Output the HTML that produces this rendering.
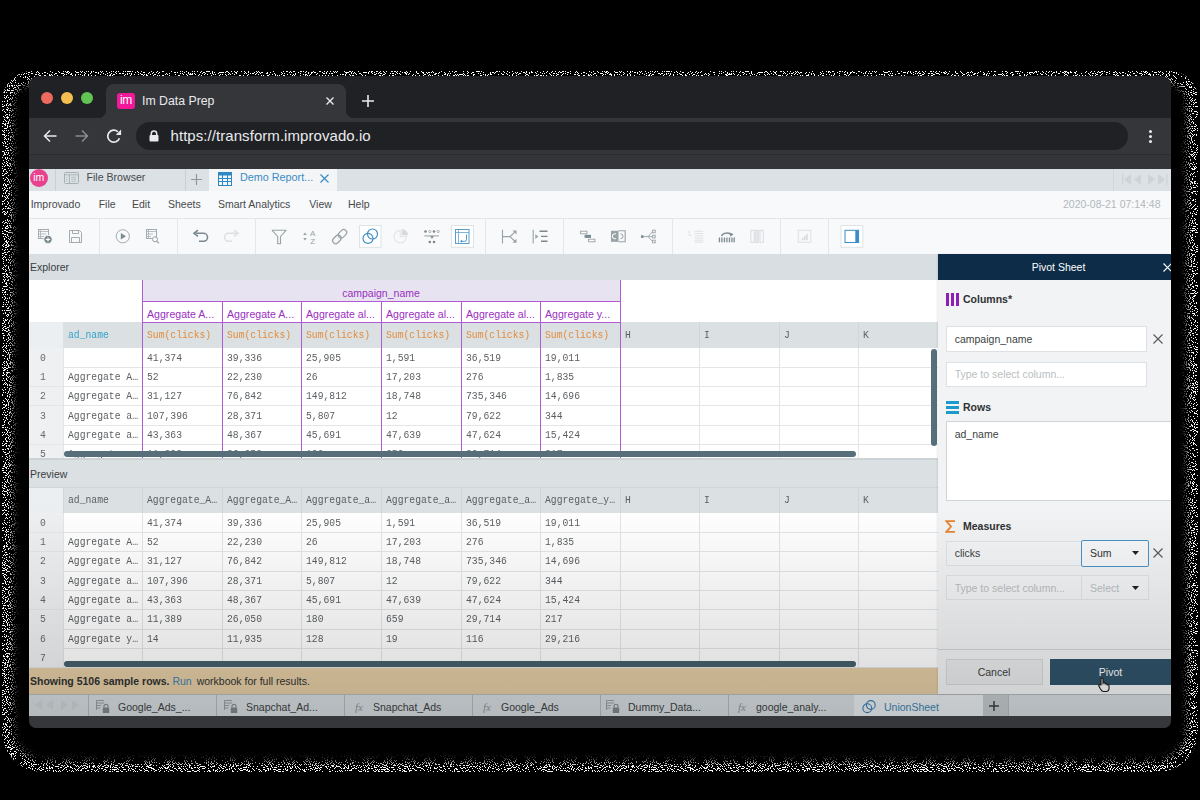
<!DOCTYPE html>
<html><head><meta charset="utf-8"><style>
html,body{margin:0;padding:0;width:1200px;height:800px;overflow:hidden;background:#000;}
body{position:relative;font-family:"Liberation Sans",sans-serif;}
div{position:absolute;box-sizing:border-box;}
svg{position:absolute;}
.m{font-family:"Liberation Mono",monospace;font-size:10.6px;line-height:12px;transform:scaleX(0.917);transform-origin:0 0;white-space:nowrap;}
b{font-weight:bold;}
</style></head><body>
<svg width="1200" height="800" style="position:absolute;left:0;top:0">
<defs>
<clipPath id="oc"><path d="M32 71H1169A28 28 0 0 1 1198 100V732A40 40 0 0 1 1158 772H42A40 40 0 0 1 2 732V101A30 30 0 0 1 32 71Z"/></clipPath>
<filter id="sh" x="0" y="0" width="1200" height="800" filterUnits="userSpaceOnUse" color-interpolation-filters="sRGB">
<feTurbulence type="fractalNoise" baseFrequency="0.95" numOctaves="1" seed="7" result="n"/>
<feColorMatrix in="n" type="matrix" values="0 0 0 0 0  0 0 0 0 0  0 0 0 0 0  -2.5 0 0 0 1.75" result="na"/>
<feComponentTransfer in="na" result="dots"><feFuncA type="discrete" tableValues="0 0 0 0 0 0 0 0 0 0 0 0 0 0 1 1 1 1 1 1"/></feComponentTransfer>
<feGaussianBlur in="SourceGraphic" stdDeviation="6" result="g"/>
<feComponentTransfer in="g" result="g2"><feFuncA type="linear" slope="2.6" intercept="0"/></feComponentTransfer>
<feComposite in="g2" in2="dots" operator="in"/>
</filter>
</defs>
<g clip-path="url(#oc)"><g filter="url(#sh)">
<path d="M35 74H1166A28 28 0 0 1 1195 103V729A40 40 0 0 1 1155 769H45A40 40 0 0 1 5 729V104A30 30 0 0 1 35 74Z" fill="none" stroke="#fff" stroke-width="6"/>
</g></g>
</svg>
<div style="left:29px;top:76px;width:1142px;height:652px;overflow:hidden;border-radius:9px 9px 7px 7px;"><div style="left:0px;top:0px;width:1142px;height:42px;background:#202124;"></div><div style="left:12px;top:16px;width:12px;height:12px;border-radius:50%;background:#ec6a5e;"></div><div style="left:32px;top:16px;width:12px;height:12px;border-radius:50%;background:#f4bf4f;"></div><div style="left:52px;top:16px;width:12px;height:12px;border-radius:50%;background:#61c554;"></div><div style="left:77px;top:8px;width:240px;height:34px;background:#35363a;border-radius:8px 8px 0 0;"></div><div style="left:69px;top:34px;width:8px;height:8px;background:radial-gradient(circle at 0 0,#202124 8px,#35363a 8.5px);"></div><div style="left:317px;top:34px;width:8px;height:8px;background:radial-gradient(circle at 100% 0,#202124 8px,#35363a 8.5px);"></div><div style="left:88px;top:17px;width:18px;height:16px;background:#f2189a;border-radius:3px;color:#fff;font-size:12px;line-height:15px;text-align:center;letter-spacing:-0.3px;">im</div><div style="left:113px;top:17px;color:#e8eaed;font-size:12.3px;line-height:16px;">Im Data Prep</div><svg style="position:absolute;left:297px;top:21px" width="8" height="8" viewBox="0 0 8 8"><path d="M0.5 0.5L7.5 7.5M7.5 0.5L0.5 7.5" stroke="#e8eaed" stroke-width="1.4"/></svg><svg style="position:absolute;left:333px;top:19px" width="12" height="12" viewBox="0 0 12 12"><path d="M6 0V12M0 6H12" stroke="#e8eaed" stroke-width="1.6"/></svg><div style="left:0px;top:42px;width:1142px;height:36px;background:#35363a;"></div><div style="left:0px;top:78px;width:1142px;height:1px;background:#2a2b2e;"></div><div style="left:0px;top:79px;width:1142px;height:14px;background:#343538;"></div><svg style="position:absolute;left:14px;top:53px" width="14" height="14" viewBox="0 0 14 14"><path d="M13.5 7H1.5M7 1.5L1.5 7L7 12.5" fill="none" stroke="#e8eaed" stroke-width="1.5"/></svg><svg style="position:absolute;left:46px;top:53px" width="14" height="14" viewBox="0 0 14 14"><path d="M0.5 7H12.5M7 1.5L12.5 7L7 12.5" fill="none" stroke="#8a8b8e" stroke-width="1.5"/></svg><svg style="position:absolute;left:78px;top:52px" width="16" height="16" viewBox="0 0 16 16"><path d="M12.44 10.25A6 6 0 1 1 10.9 3.8" fill="none" stroke="#e8eaed" stroke-width="1.7"/><path d="M14.1 1.6V6.9H8.8Z" fill="#e8eaed"/></svg><div style="left:107px;top:46px;width:992px;height:28px;background:#202124;border-radius:14px;"></div><svg style="position:absolute;left:120px;top:54px" width="10" height="12" viewBox="0 0 10 12"><path d="M2.3 5.5V3.7A2.7 2.7 0 0 1 7.7 3.7V5.5" fill="none" stroke="#e8eaed" stroke-width="1.5"/><rect x="0.5" y="5" width="9" height="6.5" rx="1" fill="#e8eaed"/></svg><div style="left:141.5px;top:51px;color:#e8eaed;font-size:15px;line-height:18px;letter-spacing:0.06px;">https://transform.improvado.io</div><div style="left:1119.5px;top:53.5px;width:3px;height:3px;border-radius:50%;background:#e8eaed;"></div><div style="left:1119.5px;top:58.5px;width:3px;height:3px;border-radius:50%;background:#e8eaed;"></div><div style="left:1119.5px;top:63.5px;width:3px;height:3px;border-radius:50%;background:#e8eaed;"></div><div style="left:0px;top:93px;width:1142px;height:22px;background:#dbe1e4;"></div><div style="left:0.7px;top:93px;width:18px;height:18px;background:#e8418d;border-radius:50%;color:#fff;font-size:10.5px;line-height:17px;text-align:center;">im</div><div style="left:26px;top:93px;width:1px;height:22px;background:#c9d0d4;"></div><svg style="position:absolute;left:35px;top:96px" width="15" height="12" viewBox="0 0 15 12"><rect x="0.5" y="0.5" width="14" height="11" rx="1" fill="none" stroke="#a7afb3"/><path d="M0.5 2.8H14.5M5.5 2.8V11.5" stroke="#a7afb3" stroke-width="0.9"/><path d="M2.3 5.3H3.7M2.3 7.3H3.7M2.3 9.3H3.7M7.3 5.3H12.2M7.3 7.3H12.2M7.3 9.3H12.2" stroke="#b3babe" stroke-width="0.8"/></svg><div style="left:57.5px;top:95px;color:#45494c;font-size:10.6px;line-height:13px;">File Browser</div><div style="left:156px;top:93px;width:1px;height:22px;background:#c9d0d4;"></div><svg style="position:absolute;left:162px;top:98px" width="11" height="11" viewBox="0 0 11 11"><path d="M5.5 0V11M0 5.5H11" stroke="#8f979c" stroke-width="1.2"/></svg><div style="left:180px;top:93px;width:128px;height:22px;background:#f3f5f6;"></div><svg style="position:absolute;left:189px;top:96px" width="14" height="14" viewBox="0 0 14 14"><rect x="0.5" y="0.5" width="13" height="13" fill="none" stroke="#2d89c5"/><rect x="0" y="0" width="14" height="3.5" fill="#2d89c5"/><path d="M0 6.5H14M0 9.5H14M4.5 3V14M9.5 3V14" stroke="#2d89c5"/></svg><div style="left:211px;top:95px;color:#3a8cc4;font-size:10.8px;line-height:13px;">Demo Report...</div><svg style="position:absolute;left:291px;top:98px" width="9" height="9" viewBox="0 0 9 9"><path d="M0.5 0.5L8.5 8.5M8.5 0.5L0.5 8.5" stroke="#3a8cc4" stroke-width="1.2"/></svg><div style="left:1084px;top:93px;width:1px;height:22px;background:#cfd5d8;"></div><svg style="position:absolute;left:1093px;top:98px" width="46" height="11" viewBox="0 0 46 11"><g fill="#cdd3d6"><rect x="0" y="0" width="1.2" height="11"/><path d="M9 0V11L2 5.5Z"/><path d="M19 0V11L12 5.5Z"/><path d="M26 0V11L33 5.5Z"/><path d="M36 0V11L43 5.5Z"/><rect x="44.3" y="0" width="1.2" height="11"/></g></svg><div style="left:0px;top:115px;width:1142px;height:27px;background:#f7f9fa;"></div><div style="left:1.7px;top:122px;color:#47494c;font-size:10.5px;line-height:13px;">Improvado</div><div style="left:69.7px;top:122px;color:#47494c;font-size:10.5px;line-height:13px;">File</div><div style="left:103px;top:122px;color:#47494c;font-size:10.5px;line-height:13px;">Edit</div><div style="left:139px;top:122px;color:#47494c;font-size:10.5px;line-height:13px;">Sheets</div><div style="left:189px;top:122px;color:#47494c;font-size:10.5px;line-height:13px;">Smart Analytics</div><div style="left:280.3px;top:122px;color:#47494c;font-size:10.5px;line-height:13px;">View</div><div style="left:319px;top:122px;color:#47494c;font-size:10.5px;line-height:13px;">Help</div><div style="left:1034px;top:122px;color:#b3b7ba;font-size:10.5px;line-height:13px;">2020-08-21 07:14:48</div><div style="left:0px;top:142px;width:1142px;height:36px;background:#f7f9fa;border-top:1px solid #e2e6e8;box-sizing:border-box;"></div><div style="left:70px;top:143px;width:1px;height:35px;background:#e4e8ea;"></div><div style="left:148px;top:143px;width:1px;height:35px;background:#e4e8ea;"></div><div style="left:226px;top:143px;width:1px;height:35px;background:#e4e8ea;"></div><div style="left:456px;top:143px;width:1px;height:35px;background:#e4e8ea;"></div><div style="left:534px;top:143px;width:1px;height:35px;background:#e4e8ea;"></div><div style="left:643px;top:143px;width:1px;height:35px;background:#e4e8ea;"></div><div style="left:751px;top:143px;width:1px;height:35px;background:#e4e8ea;"></div><div style="left:799px;top:143px;width:1px;height:35px;background:#e4e8ea;"></div><svg style="position:absolute;left:0;top:142px" width="1142" height="36" viewBox="29 218 1142 36"><rect x="38.5" y="229.5" width="10" height="9" fill="none" stroke="#a3abb0" stroke-width="1"/><path d="M38.5 231.5H48.5M38.5 234H46M38.5 236.5H44M40.5 229.5V238.5" stroke="#a9b1b5" stroke-width="0.8"/><circle cx="48" cy="239.5" r="4.2" fill="#7b8a92" stroke="#f7f9fa" stroke-width="0.9"/><path d="M48 237.4V241.6M45.9 239.5H50.1" stroke="#fff" stroke-width="1.2"/><path d="M69.5 230.5H79.5L81.5 232.5V242.5H69.5Z" fill="none" stroke="#a3abb0" stroke-width="1"/><path d="M72.5 230.5V233.5H78.5V230.5M71.5 242.5V237.5H79.5V242.5" fill="none" stroke="#a3abb0" stroke-width="1"/><circle cx="122.8" cy="236.3" r="6.6" fill="none" stroke="#a3abb0" stroke-width="1"/><path d="M120.8 233V239.6L126 236.3Z" fill="#7b8a92"/><rect x="146.5" y="229.5" width="10" height="9" fill="none" stroke="#a3abb0" stroke-width="1"/><path d="M146.5 231.5H156.5M146.5 234H153M146.5 236.5H151M148.5 229.5V238.5" stroke="#a9b1b5" stroke-width="0.8"/><circle cx="155" cy="239.3" r="2.5" fill="#f7f9fa" stroke="#99a2a7" stroke-width="1"/><path d="M156.8 241.1L159 243.3" stroke="#99a2a7" stroke-width="1.2"/><path d="M195.5 233.3H203.5A4 4 0 0 1 203.5 241.3H199" fill="none" stroke="#7b8a92" stroke-width="1.6"/><path d="M198 230.2L194 233.3L198 236.4" fill="none" stroke="#7b8a92" stroke-width="1.6"/><path d="M236.5 233.3H228.5A4 4 0 0 0 228.5 241.3H232" fill="none" stroke="#dde1e4" stroke-width="1.6"/><path d="M234 230.2L238 233.3L234 236.4" fill="none" stroke="#dde1e4" stroke-width="1.6"/><path d="M272.2 230.3H286L280.5 236.5V243.8H277.7V236.5Z" fill="none" stroke="#99a2a7" stroke-width="1.1" stroke-linejoin="round"/><path d="M303.2 235L305 232.6L306.8 235ZM303.2 238L305 240.4L306.8 238Z" fill="#99a2a7"/><text x="312.6" y="236" font-family="Liberation Sans" font-size="8" fill="#99a2a7" text-anchor="middle">A</text><text x="312.6" y="244.2" font-family="Liberation Sans" font-size="8" fill="#99a2a7" text-anchor="middle">Z</text><g transform="rotate(-45 339.7 236.6)" fill="none" stroke="#99a2a7" stroke-width="1.2"><rect x="331" y="233.6" width="9.5" height="6" rx="3"/><rect x="338.9" y="233.6" width="9.5" height="6" rx="3"/></g><rect x="359.5" y="225.5" width="21.5" height="21.8" fill="#fff" stroke="#dfe3e5" stroke-width="1"/><circle cx="368" cy="238.4" r="5" fill="none" stroke="#3b8cc5" stroke-width="1.15"/><circle cx="372.5" cy="234" r="5" fill="none" stroke="#3b8cc5" stroke-width="1.15"/><path d="M400.3 230.6A6.2 6.2 0 1 0 406.5 236.8H400.3Z" fill="none" stroke="#e1e5e7" stroke-width="1.1"/><path d="M401.8 229.1V235.3H408A6.2 6.2 0 0 0 401.8 229.1Z" fill="#d6dadd"/><g fill="#7b8a92"><circle cx="425.5" cy="231.5" r="1.3"/><circle cx="434" cy="231.5" r="1.3"/><circle cx="429.8" cy="242" r="1.3"/><circle cx="434" cy="242" r="1.3"/></g><circle cx="429.8" cy="231.5" r="1.1" fill="none" stroke="#7b8a92" stroke-width="0.6"/><circle cx="438.2" cy="231.5" r="1.1" fill="none" stroke="#7b8a92" stroke-width="0.6"/><path d="M424.3 235.9H439" stroke="#99a2a7" stroke-width="1"/><path d="M430 236.3H434L432 238.8Z" fill="#7b8a92"/><rect x="451.5" y="225.5" width="22" height="21.8" fill="#fff" stroke="#dfe3e5" stroke-width="1"/><rect x="455.5" y="229.5" width="13.5" height="14" fill="none" stroke="#3b8cc5" stroke-width="1" opacity="0.85"/><path d="M455.5 232.5H469M458.5 229.5V243.5" stroke="#3b8cc5" stroke-width="0.8" opacity="0.8"/><path d="M466.5 234.5V239.5A1.8 1.8 0 0 1 464.7 241.3H461.5" fill="none" stroke="#3b8cc5" stroke-width="0.9"/><path d="M462 239.8L460 241.3L462 242.8Z" fill="#3b8cc5"/><path d="M502.5 229.8V243.5M502.5 236.6H510L515.8 231.2M510 236.6L515.8 242" fill="none" stroke="#99a2a7" stroke-width="1.1"/><path d="M512.5 230.5H516.5V234.5ZM512.5 242.8H516.5V238.8Z" fill="#99a2a7"/><path d="M533.2 229.8V243.5" stroke="#99a2a7" stroke-width="1.1"/><path d="M535.3 234.3V238.9L538.3 236.6Z" fill="#99a2a7"/><path d="M539.5 231.2H547.5M541 236.4H547.5M541 241.3H547.5" stroke="#7b8a92" stroke-width="1.4"/><rect x="580.6" y="231.2" width="6.4" height="2.6" fill="none" stroke="#99a2a7" stroke-width="0.9"/><rect x="584.6" y="234.8" width="6.4" height="3.1" fill="#7b8a92"/><rect x="588.6" y="239.2" width="6.4" height="2.6" fill="none" stroke="#99a2a7" stroke-width="0.9"/><rect x="611" y="230.8" width="7.5" height="11" fill="#99a2a7"/><path d="M618.5 230.8H625.2V241.8H618.5" fill="none" stroke="#99a2a7" stroke-width="1.1"/><path d="M616 234A2.5 2.5 0 1 0 616 238.5" fill="none" stroke="#fff" stroke-width="1.1"/><path d="M620.5 233.8A2.5 2.5 0 1 1 620.5 238.8" fill="none" stroke="#99a2a7" stroke-width="1"/><rect x="641" y="235.3" width="2.6" height="2.6" fill="#7b8a92"/><path d="M643.6 236.6H648M648 236.6L652.6 231.5M648 236.6H652.6M648 236.6L652.6 241.5" fill="none" stroke="#99a2a7" stroke-width="0.9"/><g fill="#f7f9fa" stroke="#99a2a7" stroke-width="0.9"><rect x="652.6" y="230.2" width="2.6" height="2.6"/><rect x="652.6" y="235.3" width="2.6" height="2.6"/><rect x="652.6" y="240.2" width="2.6" height="2.6"/></g><path d="M689.3 230.8V235.5H692M694.5 231.3H703.3M694.5 233.5H703.3M694.5 235.8H703.3M694.5 238H703.3M694.5 240.2H703.3M694.5 242.2H703.3" fill="none" stroke="#dde1e4" stroke-width="0.9"/><path d="M721.5 236A5.5 4 0 0 1 731.5 235" fill="none" stroke="#7b8a92" stroke-width="1.4"/><path d="M729.8 232.5L733.5 234.2L730.5 236.8Z" fill="#7b8a92"/><g fill="#7b8a92"><rect x="718.8" y="237.5" width="1.3" height="4.8"/><rect x="721.3" y="237.5" width="1.3" height="4.8"/><rect x="723.8" y="237.5" width="1.3" height="4.8"/><rect x="726.3" y="237.5" width="1.3" height="4.8"/><rect x="728.8" y="237.5" width="1.3" height="4.8"/><rect x="731.3" y="237.5" width="1.3" height="4.8"/><rect x="733.5" y="237.5" width="1.3" height="4.8"/></g><g fill="none" stroke="#d9dde0" stroke-width="1"><rect x="750.8" y="230.3" width="3.3" height="12"/><rect x="755.3" y="230.3" width="3.3" height="12"/><rect x="760" y="230.3" width="3.3" height="12"/></g><rect x="755.8" y="230.8" width="2.3" height="11" fill="#e3e6e8"/><rect x="798.3" y="230.3" width="12.5" height="12" fill="none" stroke="#dde1e4" stroke-width="1"/><g fill="#d5d9dc"><rect x="801.8" y="237.8" width="1.5" height="2.5"/><rect x="804" y="236" width="1.5" height="4.3"/><rect x="806.2" y="234" width="1.5" height="6.3"/></g><rect x="841" y="225.5" width="21.8" height="21.8" fill="#fff" stroke="#dfe3e5" stroke-width="1"/><rect x="845" y="230.3" width="13.6" height="12.2" fill="none" stroke="#3b8cc5" stroke-width="1"/><rect x="855.3" y="230.3" width="3.3" height="12.2" fill="#3b8cc5"/></svg><div style="left:0px;top:178px;width:1142px;height:26px;background:#d8dee1;"></div><div style="left:1px;top:185px;color:#3a3d3f;font-size:10.5px;line-height:13px;">Explorer</div><div class="clip" style="left:0px;top:204px;width:909px;height:178px;background:#ffffff;overflow:hidden;"></div><div style="left:0;top:0;width:1142px;height:382px;overflow:hidden;clip-path:inset(204px 0 0 0);"><div style="left:113px;top:204px;width:478px;height:21px;background:#e7e3f1;"></div><div style="left:113px;top:211px;width:478px;text-align:center;color:#9b2fc0;font-size:10.5px;line-height:13px;">campaign_name</div><div style="left:118px;top:232px;color:#9b2fc0;font-size:10.6px;line-height:13px;white-space:nowrap;">Aggregate A...</div><div style="left:198px;top:232px;color:#9b2fc0;font-size:10.6px;line-height:13px;white-space:nowrap;">Aggregate A...</div><div style="left:277px;top:232px;color:#9b2fc0;font-size:10.6px;line-height:13px;white-space:nowrap;">Aggregate al...</div><div style="left:357px;top:232px;color:#9b2fc0;font-size:10.6px;line-height:13px;white-space:nowrap;">Aggregate al...</div><div style="left:437px;top:232px;color:#9b2fc0;font-size:10.6px;line-height:13px;white-space:nowrap;">Aggregate al...</div><div style="left:516px;top:232px;color:#9b2fc0;font-size:10.6px;line-height:13px;white-space:nowrap;">Aggregate y...</div><div style="left:0px;top:246px;width:909px;height:26px;background:#dbe0e3;"></div><div style="left:0px;top:246px;width:34px;height:26px;background:#eceff1;"></div><div class="m" style="left:38.5px;top:252.5px;color:#36a3c9;">ad_name</div><div class="m" style="left:117.5px;top:252.5px;color:#e38b3a;">Sum(clicks)</div><div class="m" style="left:197.5px;top:252.5px;color:#e38b3a;">Sum(clicks)</div><div class="m" style="left:276.5px;top:252.5px;color:#e38b3a;">Sum(clicks)</div><div class="m" style="left:356.5px;top:252.5px;color:#e38b3a;">Sum(clicks)</div><div class="m" style="left:436.5px;top:252.5px;color:#e38b3a;">Sum(clicks)</div><div class="m" style="left:515.5px;top:252.5px;color:#e38b3a;">Sum(clicks)</div><div class="m" style="left:595.5px;top:252.5px;color:#5a5f62;">H</div><div class="m" style="left:674.5px;top:252.5px;color:#5a5f62;">I</div><div class="m" style="left:754.5px;top:252.5px;color:#5a5f62;">J</div><div class="m" style="left:833.5px;top:252.5px;color:#5a5f62;">K</div><div style="left:670px;top:246px;width:1px;height:26px;background:#cfd5d8;"></div><div style="left:750px;top:246px;width:1px;height:26px;background:#cfd5d8;"></div><div style="left:829px;top:246px;width:1px;height:26px;background:#cfd5d8;"></div><div style="left:0px;top:272.0px;width:34px;height:19.3px;background:#eef0f2;"></div><div style="left:0px;top:290.8px;width:909px;height:1px;background:#e3e6e8;"></div><div class="m" style="left:11px;top:275.6px;color:#666b6e;">0</div><div class="m" style="left:38.5px;top:275.6px;color:#5b5f62;white-space:nowrap;"></div><div class="m" style="left:117.5px;top:275.6px;color:#5b5f62;white-space:nowrap;">41,374</div><div class="m" style="left:197.5px;top:275.6px;color:#5b5f62;white-space:nowrap;">39,336</div><div class="m" style="left:276.5px;top:275.6px;color:#5b5f62;white-space:nowrap;">25,905</div><div class="m" style="left:356.5px;top:275.6px;color:#5b5f62;white-space:nowrap;">1,591</div><div class="m" style="left:436.5px;top:275.6px;color:#5b5f62;white-space:nowrap;">36,519</div><div class="m" style="left:515.5px;top:275.6px;color:#5b5f62;white-space:nowrap;">19,011</div><div style="left:0px;top:291.3px;width:34px;height:19.3px;background:#eef0f2;"></div><div style="left:0px;top:310.1px;width:909px;height:1px;background:#e3e6e8;"></div><div class="m" style="left:11px;top:294.90000000000003px;color:#666b6e;">1</div><div class="m" style="left:38.5px;top:294.90000000000003px;color:#5b5f62;white-space:nowrap;">Aggregate A…</div><div class="m" style="left:117.5px;top:294.90000000000003px;color:#5b5f62;white-space:nowrap;">52</div><div class="m" style="left:197.5px;top:294.90000000000003px;color:#5b5f62;white-space:nowrap;">22,230</div><div class="m" style="left:276.5px;top:294.90000000000003px;color:#5b5f62;white-space:nowrap;">26</div><div class="m" style="left:356.5px;top:294.90000000000003px;color:#5b5f62;white-space:nowrap;">17,203</div><div class="m" style="left:436.5px;top:294.90000000000003px;color:#5b5f62;white-space:nowrap;">276</div><div class="m" style="left:515.5px;top:294.90000000000003px;color:#5b5f62;white-space:nowrap;">1,835</div><div style="left:0px;top:310.6px;width:34px;height:19.3px;background:#eef0f2;"></div><div style="left:0px;top:329.40000000000003px;width:909px;height:1px;background:#e3e6e8;"></div><div class="m" style="left:11px;top:314.20000000000005px;color:#666b6e;">2</div><div class="m" style="left:38.5px;top:314.20000000000005px;color:#5b5f62;white-space:nowrap;">Aggregate A…</div><div class="m" style="left:117.5px;top:314.20000000000005px;color:#5b5f62;white-space:nowrap;">31,127</div><div class="m" style="left:197.5px;top:314.20000000000005px;color:#5b5f62;white-space:nowrap;">76,842</div><div class="m" style="left:276.5px;top:314.20000000000005px;color:#5b5f62;white-space:nowrap;">149,812</div><div class="m" style="left:356.5px;top:314.20000000000005px;color:#5b5f62;white-space:nowrap;">18,748</div><div class="m" style="left:436.5px;top:314.20000000000005px;color:#5b5f62;white-space:nowrap;">735,346</div><div class="m" style="left:515.5px;top:314.20000000000005px;color:#5b5f62;white-space:nowrap;">14,696</div><div style="left:0px;top:329.9px;width:34px;height:19.3px;background:#eef0f2;"></div><div style="left:0px;top:348.7px;width:909px;height:1px;background:#e3e6e8;"></div><div class="m" style="left:11px;top:333.5px;color:#666b6e;">3</div><div class="m" style="left:38.5px;top:333.5px;color:#5b5f62;white-space:nowrap;">Aggregate a…</div><div class="m" style="left:117.5px;top:333.5px;color:#5b5f62;white-space:nowrap;">107,396</div><div class="m" style="left:197.5px;top:333.5px;color:#5b5f62;white-space:nowrap;">28,371</div><div class="m" style="left:276.5px;top:333.5px;color:#5b5f62;white-space:nowrap;">5,807</div><div class="m" style="left:356.5px;top:333.5px;color:#5b5f62;white-space:nowrap;">12</div><div class="m" style="left:436.5px;top:333.5px;color:#5b5f62;white-space:nowrap;">79,622</div><div class="m" style="left:515.5px;top:333.5px;color:#5b5f62;white-space:nowrap;">344</div><div style="left:0px;top:349.2px;width:34px;height:19.3px;background:#eef0f2;"></div><div style="left:0px;top:368.0px;width:909px;height:1px;background:#e3e6e8;"></div><div class="m" style="left:11px;top:352.8px;color:#666b6e;">4</div><div class="m" style="left:38.5px;top:352.8px;color:#5b5f62;white-space:nowrap;">Aggregate a…</div><div class="m" style="left:117.5px;top:352.8px;color:#5b5f62;white-space:nowrap;">43,363</div><div class="m" style="left:197.5px;top:352.8px;color:#5b5f62;white-space:nowrap;">48,367</div><div class="m" style="left:276.5px;top:352.8px;color:#5b5f62;white-space:nowrap;">45,691</div><div class="m" style="left:356.5px;top:352.8px;color:#5b5f62;white-space:nowrap;">47,639</div><div class="m" style="left:436.5px;top:352.8px;color:#5b5f62;white-space:nowrap;">47,624</div><div class="m" style="left:515.5px;top:352.8px;color:#5b5f62;white-space:nowrap;">15,424</div><div style="left:0px;top:368.5px;width:34px;height:19.3px;background:#eef0f2;"></div><div style="left:0px;top:387.3px;width:909px;height:1px;background:#e3e6e8;"></div><div class="m" style="left:11px;top:372.1px;color:#666b6e;">5</div><div class="m" style="left:38.5px;top:372.1px;color:#5b5f62;white-space:nowrap;">Aggregate a…</div><div class="m" style="left:117.5px;top:372.1px;color:#5b5f62;white-space:nowrap;">11,389</div><div class="m" style="left:197.5px;top:372.1px;color:#5b5f62;white-space:nowrap;">26,050</div><div class="m" style="left:276.5px;top:372.1px;color:#5b5f62;white-space:nowrap;">180</div><div class="m" style="left:356.5px;top:372.1px;color:#5b5f62;white-space:nowrap;">659</div><div class="m" style="left:436.5px;top:372.1px;color:#5b5f62;white-space:nowrap;">29,714</div><div class="m" style="left:515.5px;top:372.1px;color:#5b5f62;white-space:nowrap;">217</div><div style="left:34px;top:272px;width:1px;height:115.80000000000001px;background:#e3e6e8;"></div><div style="left:113px;top:272px;width:1px;height:115.80000000000001px;background:#e3e6e8;"></div><div style="left:193px;top:272px;width:1px;height:115.80000000000001px;background:#e3e6e8;"></div><div style="left:272px;top:272px;width:1px;height:115.80000000000001px;background:#e3e6e8;"></div><div style="left:352px;top:272px;width:1px;height:115.80000000000001px;background:#e3e6e8;"></div><div style="left:432px;top:272px;width:1px;height:115.80000000000001px;background:#e3e6e8;"></div><div style="left:511px;top:272px;width:1px;height:115.80000000000001px;background:#e3e6e8;"></div><div style="left:591px;top:272px;width:1px;height:115.80000000000001px;background:#e3e6e8;"></div><div style="left:670px;top:272px;width:1px;height:115.80000000000001px;background:#e3e6e8;"></div><div style="left:750px;top:272px;width:1px;height:115.80000000000001px;background:#e3e6e8;"></div><div style="left:829px;top:272px;width:1px;height:115.80000000000001px;background:#e3e6e8;"></div><div style="left:113px;top:204px;width:1px;height:178px;background:#b25ad5;"></div><div style="left:193px;top:225px;width:1px;height:157px;background:#b25ad5;"></div><div style="left:272px;top:225px;width:1px;height:157px;background:#b25ad5;"></div><div style="left:352px;top:225px;width:1px;height:157px;background:#b25ad5;"></div><div style="left:432px;top:225px;width:1px;height:157px;background:#b25ad5;"></div><div style="left:511px;top:225px;width:1px;height:157px;background:#b25ad5;"></div><div style="left:591px;top:204px;width:1px;height:178px;background:#b25ad5;"></div><div style="left:113px;top:225px;width:478px;height:1px;background:#b25ad5;"></div><div style="left:113px;top:246px;width:478px;height:1px;background:#b25ad5;"></div><div style="left:35px;top:375px;width:792px;height:6px;background:#566f7b;border-radius:3px;"></div><div style="left:902px;top:272.5px;width:6px;height:97.5px;background:#566f7b;border-radius:3px;"></div></div><div style="left:0;top:382px;width:909px;height:210px;overflow:hidden;"><div style="left:0;top:-382px;width:1142px;height:800px;"><div style="left:0px;top:382px;width:1142px;height:29px;background:#dbe0e3;border-top:2px solid #ccd2d5;box-sizing:border-box;"></div><div style="left:1px;top:392px;color:#3a3d3f;font-size:10.5px;line-height:13px;">Preview</div><div style="left:0px;top:411px;width:909px;height:181px;background:#ffffff;"></div><div style="left:0px;top:411px;width:909px;height:26.2px;background:#dbe0e3;border-top:1px solid #cfd5d8;box-sizing:border-box;"></div><div style="left:0px;top:411.5px;width:34px;height:25.7px;background:#eceff1;"></div><div class="m" style="left:38.5px;top:418px;color:#5a5f62;white-space:nowrap;">ad_name</div><div class="m" style="left:117.5px;top:418px;color:#5a5f62;white-space:nowrap;">Aggregate_A…</div><div class="m" style="left:197.5px;top:418px;color:#5a5f62;white-space:nowrap;">Aggregate_A…</div><div class="m" style="left:276.5px;top:418px;color:#5a5f62;white-space:nowrap;">Aggregate_a…</div><div class="m" style="left:356.5px;top:418px;color:#5a5f62;white-space:nowrap;">Aggregate_a…</div><div class="m" style="left:436.5px;top:418px;color:#5a5f62;white-space:nowrap;">Aggregate_a…</div><div class="m" style="left:515.5px;top:418px;color:#5a5f62;white-space:nowrap;">Aggregate_y…</div><div class="m" style="left:595.5px;top:418px;color:#5a5f62;white-space:nowrap;">H</div><div class="m" style="left:674.5px;top:418px;color:#5a5f62;white-space:nowrap;">I</div><div class="m" style="left:754.5px;top:418px;color:#5a5f62;white-space:nowrap;">J</div><div class="m" style="left:833.5px;top:418px;color:#5a5f62;white-space:nowrap;">K</div><div style="left:34px;top:411px;width:1px;height:26px;background:#cfd5d8;"></div><div style="left:113px;top:411px;width:1px;height:26px;background:#cfd5d8;"></div><div style="left:193px;top:411px;width:1px;height:26px;background:#cfd5d8;"></div><div style="left:272px;top:411px;width:1px;height:26px;background:#cfd5d8;"></div><div style="left:352px;top:411px;width:1px;height:26px;background:#cfd5d8;"></div><div style="left:432px;top:411px;width:1px;height:26px;background:#cfd5d8;"></div><div style="left:511px;top:411px;width:1px;height:26px;background:#cfd5d8;"></div><div style="left:591px;top:411px;width:1px;height:26px;background:#cfd5d8;"></div><div style="left:670px;top:411px;width:1px;height:26px;background:#cfd5d8;"></div><div style="left:750px;top:411px;width:1px;height:26px;background:#cfd5d8;"></div><div style="left:829px;top:411px;width:1px;height:26px;background:#cfd5d8;"></div><div style="left:0px;top:437.2px;width:34px;height:19.3px;background:#eef0f2;"></div><div style="left:0px;top:456.0px;width:909px;height:1px;background:#e3e6e8;"></div><div class="m" style="left:11px;top:440.8px;color:#666b6e;">0</div><div class="m" style="left:38.5px;top:440.8px;color:#5b5f62;white-space:nowrap;"></div><div class="m" style="left:117.5px;top:440.8px;color:#5b5f62;white-space:nowrap;">41,374</div><div class="m" style="left:197.5px;top:440.8px;color:#5b5f62;white-space:nowrap;">39,336</div><div class="m" style="left:276.5px;top:440.8px;color:#5b5f62;white-space:nowrap;">25,905</div><div class="m" style="left:356.5px;top:440.8px;color:#5b5f62;white-space:nowrap;">1,591</div><div class="m" style="left:436.5px;top:440.8px;color:#5b5f62;white-space:nowrap;">36,519</div><div class="m" style="left:515.5px;top:440.8px;color:#5b5f62;white-space:nowrap;">19,011</div><div style="left:0px;top:456.5px;width:34px;height:19.3px;background:#eef0f2;"></div><div style="left:0px;top:475.3px;width:909px;height:1px;background:#e3e6e8;"></div><div class="m" style="left:11px;top:460.1px;color:#666b6e;">1</div><div class="m" style="left:38.5px;top:460.1px;color:#5b5f62;white-space:nowrap;">Aggregate A…</div><div class="m" style="left:117.5px;top:460.1px;color:#5b5f62;white-space:nowrap;">52</div><div class="m" style="left:197.5px;top:460.1px;color:#5b5f62;white-space:nowrap;">22,230</div><div class="m" style="left:276.5px;top:460.1px;color:#5b5f62;white-space:nowrap;">26</div><div class="m" style="left:356.5px;top:460.1px;color:#5b5f62;white-space:nowrap;">17,203</div><div class="m" style="left:436.5px;top:460.1px;color:#5b5f62;white-space:nowrap;">276</div><div class="m" style="left:515.5px;top:460.1px;color:#5b5f62;white-space:nowrap;">1,835</div><div style="left:0px;top:475.8px;width:34px;height:19.3px;background:#eef0f2;"></div><div style="left:0px;top:494.6px;width:909px;height:1px;background:#e3e6e8;"></div><div class="m" style="left:11px;top:479.40000000000003px;color:#666b6e;">2</div><div class="m" style="left:38.5px;top:479.40000000000003px;color:#5b5f62;white-space:nowrap;">Aggregate A…</div><div class="m" style="left:117.5px;top:479.40000000000003px;color:#5b5f62;white-space:nowrap;">31,127</div><div class="m" style="left:197.5px;top:479.40000000000003px;color:#5b5f62;white-space:nowrap;">76,842</div><div class="m" style="left:276.5px;top:479.40000000000003px;color:#5b5f62;white-space:nowrap;">149,812</div><div class="m" style="left:356.5px;top:479.40000000000003px;color:#5b5f62;white-space:nowrap;">18,748</div><div class="m" style="left:436.5px;top:479.40000000000003px;color:#5b5f62;white-space:nowrap;">735,346</div><div class="m" style="left:515.5px;top:479.40000000000003px;color:#5b5f62;white-space:nowrap;">14,696</div><div style="left:0px;top:495.1px;width:34px;height:19.3px;background:#eef0f2;"></div><div style="left:0px;top:513.9px;width:909px;height:1px;background:#e3e6e8;"></div><div class="m" style="left:11px;top:498.70000000000005px;color:#666b6e;">3</div><div class="m" style="left:38.5px;top:498.70000000000005px;color:#5b5f62;white-space:nowrap;">Aggregate a…</div><div class="m" style="left:117.5px;top:498.70000000000005px;color:#5b5f62;white-space:nowrap;">107,396</div><div class="m" style="left:197.5px;top:498.70000000000005px;color:#5b5f62;white-space:nowrap;">28,371</div><div class="m" style="left:276.5px;top:498.70000000000005px;color:#5b5f62;white-space:nowrap;">5,807</div><div class="m" style="left:356.5px;top:498.70000000000005px;color:#5b5f62;white-space:nowrap;">12</div><div class="m" style="left:436.5px;top:498.70000000000005px;color:#5b5f62;white-space:nowrap;">79,622</div><div class="m" style="left:515.5px;top:498.70000000000005px;color:#5b5f62;white-space:nowrap;">344</div><div style="left:0px;top:514.4px;width:34px;height:19.3px;background:#eef0f2;"></div><div style="left:0px;top:533.1999999999999px;width:909px;height:1px;background:#e3e6e8;"></div><div class="m" style="left:11px;top:518.0px;color:#666b6e;">4</div><div class="m" style="left:38.5px;top:518.0px;color:#5b5f62;white-space:nowrap;">Aggregate a…</div><div class="m" style="left:117.5px;top:518.0px;color:#5b5f62;white-space:nowrap;">43,363</div><div class="m" style="left:197.5px;top:518.0px;color:#5b5f62;white-space:nowrap;">48,367</div><div class="m" style="left:276.5px;top:518.0px;color:#5b5f62;white-space:nowrap;">45,691</div><div class="m" style="left:356.5px;top:518.0px;color:#5b5f62;white-space:nowrap;">47,639</div><div class="m" style="left:436.5px;top:518.0px;color:#5b5f62;white-space:nowrap;">47,624</div><div class="m" style="left:515.5px;top:518.0px;color:#5b5f62;white-space:nowrap;">15,424</div><div style="left:0px;top:533.7px;width:34px;height:19.3px;background:#eef0f2;"></div><div style="left:0px;top:552.5px;width:909px;height:1px;background:#e3e6e8;"></div><div class="m" style="left:11px;top:537.3000000000001px;color:#666b6e;">5</div><div class="m" style="left:38.5px;top:537.3000000000001px;color:#5b5f62;white-space:nowrap;">Aggregate a…</div><div class="m" style="left:117.5px;top:537.3000000000001px;color:#5b5f62;white-space:nowrap;">11,389</div><div class="m" style="left:197.5px;top:537.3000000000001px;color:#5b5f62;white-space:nowrap;">26,050</div><div class="m" style="left:276.5px;top:537.3000000000001px;color:#5b5f62;white-space:nowrap;">180</div><div class="m" style="left:356.5px;top:537.3000000000001px;color:#5b5f62;white-space:nowrap;">659</div><div class="m" style="left:436.5px;top:537.3000000000001px;color:#5b5f62;white-space:nowrap;">29,714</div><div class="m" style="left:515.5px;top:537.3000000000001px;color:#5b5f62;white-space:nowrap;">217</div><div style="left:0px;top:553.0px;width:34px;height:19.3px;background:#eef0f2;"></div><div style="left:0px;top:571.8px;width:909px;height:1px;background:#e3e6e8;"></div><div class="m" style="left:11px;top:556.6px;color:#666b6e;">6</div><div class="m" style="left:38.5px;top:556.6px;color:#5b5f62;white-space:nowrap;">Aggregate y…</div><div class="m" style="left:117.5px;top:556.6px;color:#5b5f62;white-space:nowrap;">14</div><div class="m" style="left:197.5px;top:556.6px;color:#5b5f62;white-space:nowrap;">11,935</div><div class="m" style="left:276.5px;top:556.6px;color:#5b5f62;white-space:nowrap;">128</div><div class="m" style="left:356.5px;top:556.6px;color:#5b5f62;white-space:nowrap;">19</div><div class="m" style="left:436.5px;top:556.6px;color:#5b5f62;white-space:nowrap;">116</div><div class="m" style="left:515.5px;top:556.6px;color:#5b5f62;white-space:nowrap;">29,216</div><div style="left:0px;top:572.3px;width:34px;height:19.3px;background:#eef0f2;"></div><div style="left:0px;top:591.0999999999999px;width:909px;height:1px;background:#e3e6e8;"></div><div class="m" style="left:11px;top:575.9px;color:#666b6e;">7</div><div class="m" style="left:38.5px;top:575.9px;color:#5b5f62;white-space:nowrap;"></div><div class="m" style="left:117.5px;top:575.9px;color:#5b5f62;white-space:nowrap;"></div><div class="m" style="left:197.5px;top:575.9px;color:#5b5f62;white-space:nowrap;"></div><div class="m" style="left:276.5px;top:575.9px;color:#5b5f62;white-space:nowrap;"></div><div class="m" style="left:356.5px;top:575.9px;color:#5b5f62;white-space:nowrap;"></div><div class="m" style="left:436.5px;top:575.9px;color:#5b5f62;white-space:nowrap;"></div><div class="m" style="left:515.5px;top:575.9px;color:#5b5f62;white-space:nowrap;"></div><div style="left:34px;top:437.2px;width:1px;height:154.4px;background:#e3e6e8;"></div><div style="left:113px;top:437.2px;width:1px;height:154.4px;background:#e3e6e8;"></div><div style="left:193px;top:437.2px;width:1px;height:154.4px;background:#e3e6e8;"></div><div style="left:272px;top:437.2px;width:1px;height:154.4px;background:#e3e6e8;"></div><div style="left:352px;top:437.2px;width:1px;height:154.4px;background:#e3e6e8;"></div><div style="left:432px;top:437.2px;width:1px;height:154.4px;background:#e3e6e8;"></div><div style="left:511px;top:437.2px;width:1px;height:154.4px;background:#e3e6e8;"></div><div style="left:591px;top:437.2px;width:1px;height:154.4px;background:#e3e6e8;"></div><div style="left:670px;top:437.2px;width:1px;height:154.4px;background:#e3e6e8;"></div><div style="left:750px;top:437.2px;width:1px;height:154.4px;background:#e3e6e8;"></div><div style="left:829px;top:437.2px;width:1px;height:154.4px;background:#e3e6e8;"></div><div style="left:35px;top:584.5px;width:792px;height:6.5px;background:#46606b;border-radius:3px;"></div></div></div><div style="left:0px;top:592px;width:909px;height:26px;background:#e3cca3;"></div><div style="left:1px;top:599px;color:#2f3133;font-size:10.5px;line-height:13px;white-space:nowrap;"><b>Showing 5106 sample rows.</b> <span style="color:#3a7fb8">Run</span><span style="margin-left:5px">workbook</span> for full results.</div><div style="left:0px;top:618px;width:1142px;height:22px;background:#d5dbdf;"></div><div style="left:0px;top:618px;width:1142px;height:1px;background:#b5bbbe;"></div><svg style="position:absolute;left:6px;top:624px" width="44" height="10" viewBox="0 0 44 10"><g fill="#ccd2d5"><path d="M0 5L7 0V10Z"/><path d="M11 5L18 0V10Z"/><path d="M33 5L26 0V10Z"/><path d="M44 5L37 0V10Z"/></g></svg><div style="left:59px;top:619px;width:1px;height:21px;background:#b3b9bc;"></div><div style="left:187px;top:619px;width:1px;height:21px;background:#b3b9bc;"></div><div style="left:315px;top:619px;width:1px;height:21px;background:#b3b9bc;"></div><div style="left:443px;top:619px;width:1px;height:21px;background:#b3b9bc;"></div><div style="left:571px;top:619px;width:1px;height:21px;background:#b3b9bc;"></div><div style="left:698.5px;top:619px;width:1px;height:21px;background:#b3b9bc;"></div><div style="left:824.75px;top:619px;width:1px;height:21px;background:#b3b9bc;"></div><div style="left:953px;top:619px;width:1px;height:21px;background:#b3b9bc;"></div><div style="left:978.5px;top:619px;width:1px;height:21px;background:#b3b9bc;"></div><div style="left:824.75px;top:619px;width:129.25px;height:21px;background:#e6ebee;"></div><div style="left:954px;top:619px;width:25px;height:21px;background:#c2c8cb;"></div><svg style="position:absolute;left:960px;top:625px" width="10" height="10" viewBox="0 0 10 10"><path d="M5 0V10M0 5H10" stroke="#3a3f42" stroke-width="1.5"/></svg><svg style="position:absolute;left:67px;top:624px" width="14" height="14" viewBox="0 0 14 14"><path d="M0.5 0.5H8M0.5 3H8M0.5 5.5H5M0.5 8H4.5M0.5 0.5V10" fill="none" stroke="#8f979b" stroke-width="0.9"/><path d="M8 7.5V6.3A2 2 0 0 1 12 6.3V7.5" fill="none" stroke="#7f878b" stroke-width="1.1"/><rect x="6.8" y="7.5" width="6.4" height="5.5" rx="0.6" fill="#7f878b"/></svg><div style="left:89px;top:625px;color:#3c3f42;font-size:10.5px;line-height:13px;white-space:nowrap;">Google_Ads_...</div><svg style="position:absolute;left:195px;top:624px" width="14" height="14" viewBox="0 0 14 14"><path d="M0.5 0.5H8M0.5 3H8M0.5 5.5H5M0.5 8H4.5M0.5 0.5V10" fill="none" stroke="#8f979b" stroke-width="0.9"/><path d="M8 7.5V6.3A2 2 0 0 1 12 6.3V7.5" fill="none" stroke="#7f878b" stroke-width="1.1"/><rect x="6.8" y="7.5" width="6.4" height="5.5" rx="0.6" fill="#7f878b"/></svg><div style="left:217px;top:625px;color:#3c3f42;font-size:10.5px;line-height:13px;white-space:nowrap;">Snapchat_Ad...</div><div style="left:326px;top:625px;color:#8d9498;font-family:'Liberation Serif',serif;font-size:11px;line-height:12px;"><i>fx</i></div><div style="left:344px;top:625px;color:#3c3f42;font-size:10.5px;line-height:13px;white-space:nowrap;">Snapchat_Ads</div><div style="left:454px;top:625px;color:#8d9498;font-family:'Liberation Serif',serif;font-size:11px;line-height:12px;"><i>fx</i></div><div style="left:472px;top:625px;color:#3c3f42;font-size:10.5px;line-height:13px;white-space:nowrap;">Google_Ads</div><svg style="position:absolute;left:577px;top:624px" width="14" height="14" viewBox="0 0 14 14"><path d="M0.5 0.5H8M0.5 3H8M0.5 5.5H5M0.5 8H4.5M0.5 0.5V10" fill="none" stroke="#8f979b" stroke-width="0.9"/><path d="M8 7.5V6.3A2 2 0 0 1 12 6.3V7.5" fill="none" stroke="#7f878b" stroke-width="1.1"/><rect x="6.8" y="7.5" width="6.4" height="5.5" rx="0.6" fill="#7f878b"/></svg><div style="left:599px;top:625px;color:#3c3f42;font-size:10.5px;line-height:13px;white-space:nowrap;">Dummy_Data...</div><div style="left:709px;top:625px;color:#8d9498;font-family:'Liberation Serif',serif;font-size:11px;line-height:12px;"><i>fx</i></div><div style="left:727px;top:625px;color:#3c3f42;font-size:10.5px;line-height:13px;white-space:nowrap;">google_analy...</div><svg style="position:absolute;left:833px;top:624px" width="15" height="14" viewBox="0 0 15 14"><circle cx="5.3" cy="8.2" r="4.4" fill="none" stroke="#3a7fb0" stroke-width="1.1"/><circle cx="8.8" cy="5" r="4.4" fill="none" stroke="#3a7fb0" stroke-width="1.1"/></svg><div style="left:855px;top:625px;color:#3a7fb0;font-size:10.5px;line-height:13px;">UnionSheet</div><div style="left:0px;top:640px;width:1142px;height:12px;background:#404145;"></div><div style="left:909px;top:178px;width:233px;height:440px;background:#f1f3f4;box-shadow:-1px 0 2px rgba(0,0,0,0.08);"></div><div style="left:909px;top:178px;width:233px;height:26px;background:#0c2c47;"></div><div style="left:909px;top:185px;width:241px;text-align:center;color:#fff;font-size:10.5px;line-height:13px;">Pivot Sheet</div><svg style="position:absolute;left:1134px;top:187px" width="9" height="9" viewBox="0 0 9 9"><path d="M0.5 0.5L8.5 8.5M8.5 0.5L0.5 8.5" stroke="#fff" stroke-width="1.1"/></svg><svg style="position:absolute;left:917px;top:217px" width="13" height="13" viewBox="0 0 13 13"><g fill="#8c1fb6"><rect x="0" y="0" width="3" height="13"/><rect x="5" y="0" width="3" height="13"/><rect x="10" y="0" width="3" height="13"/></g></svg><div style="left:934px;top:217px;color:#2f3133;font-size:10.5px;line-height:13px;"><b>Columns*</b></div><div style="left:917px;top:250px;width:201px;height:25.5px;background:#fff;border:1px solid #dde1e3;"></div><div style="left:925.7px;top:257px;color:#3c3f41;font-size:10.5px;line-height:13px;">campaign_name</div><svg style="position:absolute;left:1124px;top:258px" width="10" height="10" viewBox="0 0 10 10"><path d="M0.5 0.5L9.5 9.5M9.5 0.5L0.5 9.5" stroke="#55595c" stroke-width="1.1"/></svg><div style="left:917px;top:285.5px;width:201px;height:25px;background:#fff;border:1px solid #dde1e3;"></div><div style="left:925.7px;top:292px;color:#b9bec1;font-size:10.5px;line-height:13px;">Type to select column...</div><svg style="position:absolute;left:917px;top:325px" width="13" height="13" viewBox="0 0 13 13"><g fill="#1a9bcb"><rect x="0" y="0" width="13" height="3"/><rect x="0" y="5" width="13" height="3"/><rect x="0" y="10" width="13" height="3"/></g></svg><div style="left:934px;top:325px;color:#2f3133;font-size:10.5px;line-height:13px;"><b>Rows</b></div><div style="left:917px;top:345px;width:240px;height:80px;background:#fff;border:1px solid #cfd4d7;"></div><div style="left:925.7px;top:352px;color:#3c3f41;font-size:10.5px;line-height:13px;">ad_name</div><svg style="position:absolute;left:916px;top:443.5px" width="11" height="13" viewBox="0 0 11 13"><path d="M10 1.2H1.3L6 6.5L1.3 11.8H10" fill="none" stroke="#e8822e" stroke-width="1.8"/></svg><div style="left:934px;top:444px;color:#2f3133;font-size:10.5px;line-height:13px;"><b>Measures</b></div><div style="left:917px;top:464.5px;width:136px;height:25.5px;background:#f3f4f5;border:1px solid #e0e3e5;"></div><div style="left:925.7px;top:471px;color:#3c3f41;font-size:10.5px;line-height:13px;">clicks</div><div style="left:1052px;top:464px;width:68px;height:26.5px;background:#f6f7f8;border:1.5px solid #4a92c9;border-radius:2px;"></div><div style="left:1061px;top:471px;color:#2f3133;font-size:10.5px;line-height:13px;">Sum</div><svg style="position:absolute;left:1103px;top:475px" width="7" height="4" viewBox="0 0 7 4"><path d="M0 0H7L3.5 4Z" fill="#222"/></svg><svg style="position:absolute;left:1124px;top:472px" width="10" height="10" viewBox="0 0 10 10"><path d="M0.5 0.5L9.5 9.5M9.5 0.5L0.5 9.5" stroke="#55595c" stroke-width="1.1"/></svg><div style="left:917px;top:499px;width:136px;height:25px;background:#f3f4f5;border:1px solid #e0e3e5;"></div><div style="left:925.7px;top:505.5px;color:#b9bec1;font-size:10.5px;line-height:13px;">Type to select column...</div><div style="left:1052px;top:499px;width:68px;height:25px;background:#f3f4f5;border:1px solid #e0e3e5;"></div><div style="left:1061px;top:505.5px;color:#b9bec1;font-size:10.5px;line-height:13px;">Select</div><svg style="position:absolute;left:1103px;top:510px" width="7" height="4" viewBox="0 0 7 4"><path d="M0 0H7L3.5 4Z" fill="#222"/></svg><div style="left:909px;top:572.5px;width:233px;height:1px;background:#d3d6d8;"></div><div style="left:917px;top:583px;width:96.5px;height:25.5px;background:#e9ebec;border:1px solid #d6d9db;"></div><div style="left:917px;top:590px;width:96px;text-align:center;color:#3c3f41;font-size:10.5px;line-height:13px;">Cancel</div><div style="left:1021px;top:583px;width:130px;height:25.5px;background:#30536a;"></div><div style="left:1021px;top:590px;width:121px;text-align:center;color:#fff;font-size:10.5px;line-height:13px;">Pivot</div><svg style="position:absolute;left:1068.5px;top:601px" width="12" height="15" viewBox="0 0 12 15"><path d="M3 8V2A1 1 0 0 1 5 2V7.5V6A1 1 0 0 1 7 6V7.5A1 1 0 0 1 9 7.5V8.5A1 1 0 0 1 11 8.5V11.5Q11 14 8.5 14.5H5.5Q4 14.5 2.5 12L0.8 9A1 1 0 0 1 2.5 8Z" fill="#f4f4f4" stroke="#1a1a1a" stroke-width="1.1"/></svg><div style="left:0px;top:430px;width:1142px;height:222px;background:linear-gradient(to bottom,rgba(0,0,0,0) 0%,rgba(0,0,0,0.16) 100%);pointer-events:none;"></div></div>
</body></html>
